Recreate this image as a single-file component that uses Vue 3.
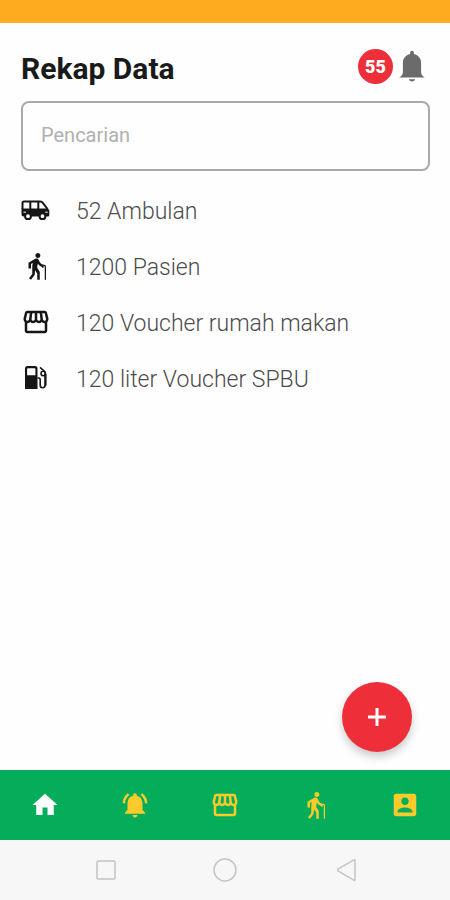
<script setup>
import { ref } from 'vue'

const search = ref('')

const shapes = {
  home: 'M10 20v-6h4v6h5v-8h3L12 3 2 12h3v8z',
  alert:
    'M7.58 4.08L6.15 2.65C3.75 4.48 2.17 7.3 2.03 10.5h2c.15-2.65 1.51-4.97 3.55-6.42zm12.39 6.42h2c-.15-3.2-1.73-6.02-4.12-7.85l-1.42 1.43c2.02 1.45 3.39 3.77 3.54 6.42zM18 11c0-3.07-1.64-5.64-4.5-6.32V4c0-.83-.67-1.5-1.5-1.5s-1.5.67-1.5 1.5v.68C7.63 5.36 6 7.92 6 11v5l-2 2v1h16v-1l-2-2v-5zm-6 11c.14 0 .27-.01.4-.04.65-.14 1.18-.58 1.44-1.18.1-.24.15-.5.15-.78h-4c.01 1.1.9 2 2.01 2z',
  store:
    'M21.9 8.89l-1.05-4.37c-.22-.9-1-1.52-1.91-1.52H5.05c-.9 0-1.69.63-1.9 1.52L2.1 8.89c-.24 1.02-.02 2.06.62 2.88.08.11.19.19.28.29V19c0 1.1.9 2 2 2h14c1.1 0 2-.9 2-2v-6.94c.09-.09.2-.18.28-.28.64-.82.87-1.87.62-2.89zm-2.99-3.9l1.05 4.37c.1.42.01.84-.25 1.17-.14.18-.44.47-.94.47-.61 0-1.14-.49-1.21-1.14L16.98 5l1.93-.01zM13 5h1.96l.54 4.52c.05.39-.07.78-.33 1.07-.22.26-.54.41-.95.41-.67 0-1.22-.59-1.22-1.31V5zM8.49 9.52L9.04 5H11v4.69c0 .72-.55 1.31-1.29 1.31-.34 0-.65-.15-.89-.41-.25-.29-.37-.68-.33-1.07zm-4.45-.16L5.05 5h1.97l-.58 4.86c-.08.65-.6 1.14-1.21 1.14-.49 0-.8-.29-.93-.47-.27-.32-.36-.75-.26-1.17zM5 19v-6.03c.08.01.15.03.23.03.87 0 1.66-.36 2.24-.95.6.6 1.4.95 2.31.95.87 0 1.65-.36 2.23-.93.59.57 1.39.93 2.29.93.84 0 1.64-.35 2.24-.95.58.59 1.37.95 2.24.95.08 0 .15-.02.23-.03V19H5z',
  elderly:
    'M13.5 5.5c1.1 0 2-.9 2-2s-.9-2-2-2-2 .9-2 2 .9 2 2 2zm6.5 7V23h-1V12.5c0-.28-.22-.5-.5-.5s-.5.22-.5.5v1h-1v-.69c-1.46-.38-2.7-1.29-3.51-2.52-.31.87-.49 1.78-.49 2.71 0 .23.02.46.03.69L15 16.5V23h-2v-5l-1.78-2.54L11 19l-3 4-1.6-1.2L9 18.33V13c0-1.15.18-2.29.5-3.39L8 10.46V14H6V9.3l5.4-3.07v.01c.59-.31 1.32-.33 1.94.03.36.21.63.51.8.85l.79 1.67C15.58 10.1 16.94 11 18.5 11c.83 0 1.5.67 1.5 1.5z',
  account:
    'M3 5v14c0 1.1.89 2 2 2h14c1.1 0 2-.9 2-2V5c0-1.1-.9-2-2-2H5c-1.11 0-2 .9-2 2zm12 4c0 1.66-1.34 3-3 3s-3-1.34-3-3 1.34-3 3-3 3 1.34 3 3zm-9 8c0-2 4-3.1 6-3.1s6 1.1 6 3.1v1H6v-1z'
}

const rows = [
  { icon: 'van', text: '52 Ambulan' },
  { icon: 'elderly', text: '1200 Pasien' },
  { icon: 'store', text: '120 Voucher rumah makan' },
  { icon: 'pump', text: '120 liter Voucher SPBU' }
]

const tabs = [
  { icon: 'home', label: 'Beranda' },
  { icon: 'alert', label: 'Notifikasi' },
  { icon: 'store', label: 'Voucher' },
  { icon: 'elderly', label: 'Pasien' },
  { icon: 'account', label: 'Akun' }
]
const active = ref('home')
</script>

<template>
  <div class="screen">
    <div class="status"></div>

    <main class="content">
      <header class="head">
        <h1>Rekap Data</h1>
        <button class="notify" type="button" aria-label="Notifikasi">
          <span class="count">55</span>
          <svg class="bell" viewBox="0 0 26 32" aria-hidden="true">
            <path
              d="M13 .8c1.200 0 1.900.8 1.900 1.900v1.400c4 .8 7.200 4.100 7.200 8.800v9.300c0 2.400 1.600 3.800 3.600 5.300H.3c2-1.500 3.600-2.900 3.600-5.300v-9.300c0-4.700 3.200-8 7.200-8.800V2.700c0-1.100.7-1.900 1.900-1.900z"
            />
            <path d="M9.800 29.200h6.400c-.5 1.400-1.700 2.200-3.200 2.200s-2.700-.8-3.200-2.200z" />
          </svg>
        </button>
      </header>

      <input v-model="search" class="search" type="text" placeholder="Pencarian" aria-label="Pencarian" />

      <ul class="list">
        <li v-for="row in rows" :key="row.text">
          <svg v-if="row.icon === 'van'" class="icon" viewBox="0 0 30 30" aria-hidden="true">
            <path
              class="line"
              d="M1.500 14V8A1.500 1.500 0 0 1 3 6.500h16.300c1 0 1.700.4 2.300 1.200l4.900 6.300M9.300 6.500v8M17.300 6.500v8"
            />
            <path d="M.5 13.500H27l1.300 2V20a1.500 1.500 0 0 1-1.500 1.500H2.500a2 2 0 0 1-2-2z" />
            <path class="lamp" d="M2.500 17.200h2.500M24.300 17.200h2.400" />
            <circle class="line wheel" cx="7" cy="21.200" r="2.900" />
            <circle class="line wheel" cx="21.500" cy="21.200" r="2.900" />
          </svg>
          <svg v-else-if="row.icon === 'pump'" class="icon" viewBox="0 0 30 30" aria-hidden="true">
            <path
              fill-rule="evenodd"
              d="M6.500 3H14a2.500 2.500 0 0 1 2.500 2.500V26H4V5.500A2.500 2.500 0 0 1 6.500 3zM7 5.200a.9.9 0 0 0-.9.900v6.100h8.300V6.100a.9.9 0 0 0-.9-.9z"
            />
            <path class="line thin" d="M16.500 15h1.200c1 0 1.500.6 1.500 1.500v5.700c0 1.600.9 2.500 2.300 2.500s2.600-.9 2.600-2.500V10c0-.8-.3-1.400-.9-2L19 4.300" />
            <circle class="line thin" cx="22.200" cy="10.500" r="2.200" />
            <path d="M23.600 11h2v11.500h-2z" />
          </svg>
          <svg v-else class="icon" viewBox="0 0 24 24" aria-hidden="true"><path :d="shapes[row.icon]" /></svg>
          <span>{{ row.text }}</span>
        </li>
      </ul>

      <button class="add" type="button" aria-label="Tambah">
        <svg viewBox="0 0 18 18" aria-hidden="true"><path d="M9 0v18M0 9h18" /></svg>
      </button>
    </main>

    <nav class="tabs">
      <button
        v-for="tab in tabs"
        :key="tab.icon"
        type="button"
        :class="{ active: active === tab.icon }"
        :aria-label="tab.label"
        @click="active = tab.icon"
      >
        <svg viewBox="0 0 24 24" aria-hidden="true"><path :d="shapes[tab.icon]" /></svg>
      </button>
    </nav>

    <div class="system">
      <button type="button" aria-label="Aplikasi terbaru">
        <svg viewBox="0 0 24 24" aria-hidden="true"><rect x="4" y="3" width="18" height="18" rx="1" /></svg>
      </button>
      <button type="button" aria-label="Layar utama">
        <svg viewBox="0 0 24 24" aria-hidden="true"><circle cx="12" cy="12" r="11" /></svg>
      </button>
      <button type="button" aria-label="Kembali">
        <svg viewBox="0 0 24 24" aria-hidden="true"><path d="M22 2.500v19c0 .8-.6 1.100-1.200.7L5 12.800c-.6-.4-.6-1.200 0-1.600L20.800 1.800c.6-.4 1.200-.1 1.200.7z" /></svg>
      </button>
    </div>
  </div>
</template>

<style>
body {
  margin: 0;
  background: #fefefe;
}
</style>

<style scoped>
.screen {
  display: flex;
  flex-direction: column;
  min-height: 100vh;
  font-family: Roboto, sans-serif;
}
.screen * {
  box-sizing: border-box;
}
button {
  display: flex;
  align-items: center;
  justify-content: center;
  padding: 0;
  border: 0;
  background: none;
  font-family: inherit;
  cursor: pointer;
}
.status {
  height: 23px;
  background: #ffab20;
}
.content {
  flex: 1;
  display: flex;
  flex-direction: column;
  padding: 24px 20px 18px 21px;
}
.head {
  display: flex;
  align-items: center;
  justify-content: space-between;
  height: 38px;
  padding-right: 5px;
}
h1 {
  margin: 0;
  padding-top: 6px;
  font-size: 30px;
  line-height: 38px;
  font-weight: 700;
  color: #1a1a1a;
}
.notify {
  gap: 6px;
}
.count {
  width: 35px;
  height: 35px;
  border-radius: 50%;
  background: #ee2f3a;
  color: #fff;
  font-size: 18px;
  line-height: 36px;
  font-weight: 900;
  text-align: center;
}
.bell {
  width: 26px;
  height: 32px;
  fill: #6b6b6b;
}
.search {
  width: 100%;
  height: 70px;
  margin-top: 16px;
  padding: 0 18px 2px;
  border: 2px solid #a9a9a9;
  border-radius: 8px;
  background: transparent;
  font-family: inherit;
  font-size: 20px;
  color: #444;
}
.search::placeholder {
  color: #b0b0b0;
  opacity: 1;
}
.list {
  display: flex;
  flex-direction: column;
  gap: 22px;
  margin: 24px 0 auto;
  padding: 0;
  list-style: none;
}
.list li {
  display: flex;
  align-items: flex-start;
  gap: 25px;
  font-size: 23px;
  line-height: 34px;
  font-weight: 300;
  color: #4c4c4c;
}
.icon {
  width: 30px;
  height: 30px;
  flex: none;
  fill: #161616;
}
.line {
  fill: none;
  stroke: #161616;
  stroke-width: 2;
}
.wheel {
  fill: #fefefe;
}
.lamp {
  stroke: #fefefe;
  stroke-width: 1;
}
.thin {
  stroke-width: 1.6;
}
.add {
  align-self: flex-end;
  width: 70px;
  height: 70px;
  margin-right: 18px;
  border-radius: 50%;
  background: #ee2f3a;
  box-shadow: 0 5px 8px rgba(0, 0, 0, 0.2);
}
.add svg {
  width: 18px;
  height: 18px;
  fill: none;
  stroke: #fff;
  stroke-width: 3;
}
.tabs {
  display: grid;
  grid-template-columns: repeat(5, 1fr);
  height: 70px;
  background: #05ad5b;
}
.tabs svg {
  width: 30px;
  height: 30px;
  fill: #fbca2b;
}
.tabs .active svg {
  fill: #fff;
}
.system {
  display: flex;
  align-items: center;
  justify-content: center;
  height: 60px;
  background: #f7f7f7;
}
.system button {
  width: 120px;
  height: 60px;
}
.system svg {
  width: 24px;
  height: 24px;
  fill: none;
  stroke: #c4c4c4;
  stroke-width: 1.5;
}
</style>
